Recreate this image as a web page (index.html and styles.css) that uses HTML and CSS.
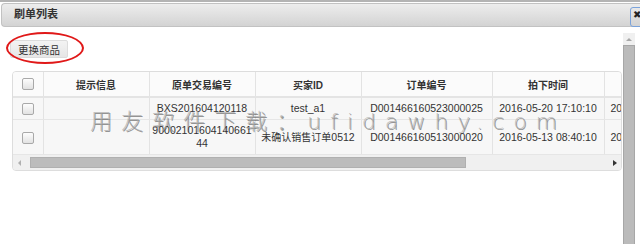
FILE: index.html
```html
<!DOCTYPE html>
<html lang="zh-CN">
<head>
  <meta charset="UTF-8">
  <title>刷单列表</title>
  <link rel="stylesheet" href="styles.css">
</head>
<body>
  <div class="dialog">
    <div class="titlebar">
      <span class="title">刷单列表</span>
      <span class="close">✖</span>
    </div>

    <div class="body">
      <div class="main">
        <div class="toolbar">
          <button class="btn">更换商品</button>
          <span class="ring"></span>
        </div>

        <div class="grid">
          <div class="grid-scroll">
            <table>
              <colgroup>
                <col class="c-check"><col class="c-w"><col class="c-w"><col class="c-w"><col class="c-order"><col class="c-time"><col class="c-time">
              </colgroup>
              <thead>
                <tr>
                  <th><span class="cb"></span></th>
                  <th>提示信息</th>
                  <th>原单交易编号</th>
                  <th>买家ID</th>
                  <th>订单编号</th>
                  <th>拍下时间</th>
                  <th></th>
                </tr>
              </thead>
              <tbody>
                <tr>
                  <td><span class="cb"></span></td>
                  <td></td>
                  <td class="wrap">BXS201604120118</td>
                  <td>test_a1</td>
                  <td>D001466160523000025</td>
                  <td>2016-05-20 17:10:10</td>
                  <td class="cut">20</td>
                </tr>
                <tr>
                  <td><span class="cb"></span></td>
                  <td></td>
                  <td class="wrap">9000210160414066144</td>
                  <td><span class="cjk">未确认销售订单</span>0512</td>
                  <td>D001466160513000020</td>
                  <td>2016-05-13 08:40:10</td>
                  <td class="cut">20</td>
                </tr>
              </tbody>
            </table>
          </div>
          <div class="hscroll">
            <span class="arrow-left"></span>
            <span class="hthumb"></span>
            <span class="arrow-right"></span>
          </div>
        </div>
      </div>

      <div class="vscroll">
        <span class="arrow-up"></span>
        <span class="vthumb"></span>
      </div>
    </div>

    <div class="watermark">用友软件下载：ufidawhy.com</div>
  </div>
</body>
</html>
```

FILE: styles.css
```css
body {
  margin: 0;
  width: 640px;
  height: 244px;
  overflow: hidden;
  background-color: #ffffff;
  color: #333333;
  font-family: 'Liberation Sans', 'Noto Sans CJK SC', sans-serif;
  font-size: 10.5px;
}

.dialog {
  position: relative;
  height: 244px;
  border-top: 2px solid #b4b4b4;
  padding-top: 1px;
  box-sizing: border-box;
}

.titlebar {
  display: flex;
  align-items: flex-start;
  height: 22px;
  margin-left: 1px;
  padding-left: 12px;
  border: 1px solid #c2c2c2;
  border-right: none;
  border-radius: 4px 0 0 4px;
  background: linear-gradient(#ededed, #d3d3d3);
}

.title {
  font-size: 11px;
  font-weight: bold;
  color: #333;
  line-height: 21px;
}

.close {
  margin-left: auto;
  margin-top: 3px;
  margin-right: -4px;
  width: 14px;
  height: 20px;
  border: 1px solid #7ba3db;
  border-radius: 3px;
  font-size: 10px;
  line-height: 14px;
  color: #222;
  text-indent: 2px;
  box-sizing: border-box;
}

.body {
  display: flex;
}

.main {
  width: 623px;
  padding-top: 13px;
}

/* toolbar */
.toolbar {
  position: relative;
  height: 18px;
  padding-left: 10px;
  margin-bottom: 13px;
}

.btn {
  height: 18px;
  width: 58px;
  padding: 0;
  border: 1px solid #dcdcdc;
  border-radius: 2px;
  background: linear-gradient(#f3f3f3, #e6e6e6);
  font-family: inherit;
  font-size: 10.5px;
  color: #333;
}

.ring {
  position: absolute;
  left: 6px;
  top: -8px;
  width: 74px;
  height: 28px;
  border: 2px solid #e01818;
  border-radius: 50%;
}

/* grid */
.grid {
  width: 608px;
  margin-left: 12px;
  border: 1px solid #dddddd;
  border-radius: 4px;
  overflow: hidden;
  background-color: #f7f7f7;
}

.grid-scroll {
  overflow: hidden;
}

table {
  width: 609px;
  table-layout: fixed;
  border-collapse: collapse;
}

.c-check { width: 30px; }
.c-w { width: 106px; }
.c-order { width: 131px; }
.c-time { width: 112px; }
.c-time:last-child { width: 18px; }

th, td {
  border-right: 1px solid #e3e3e3;
  text-align: center;
  white-space: nowrap;
  padding: 0 2px;
  overflow: hidden;
}

th {
  height: 24px;
  font-size: 10px;
  font-weight: bold;
  color: #333;
  background-color: #fbfbfb;
  border-bottom: 2px solid #e4e4e4;
}

td {
  padding-top: 4px;
  padding-bottom: 4px;
  line-height: 13px;
  border-bottom: 1px solid #e6e6e6;
}

td.wrap {
  white-space: normal;
  word-break: break-all;
}

td.cut {
  text-align: left;
  text-overflow: clip;
  padding: 4px 0 4px 6px;
  border-right: none;
}

.cjk {
  font-size: 10px;
}

.cb {
  display: inline-block;
  width: 10px;
  height: 10px;
  vertical-align: middle;
  border: 1px solid #a9a9a9;
  border-radius: 2px;
  background: linear-gradient(#fdfdfd, #e2e2e2);
}

.hscroll {
  display: flex;
  align-items: center;
  height: 15px;
  background-color: #f0f0f0;
}

.hthumb {
  width: 436px;
  height: 11px;
  margin-left: 9px;
  background-color: #bcbcbc;
  border: 1px solid #b0b0b0;
  box-sizing: border-box;
}

.arrow-left {
  margin-left: 5px;
  border-right: 3px solid #b0b0b0;
  border-top: 3px solid transparent;
  border-bottom: 3px solid transparent;
}

.arrow-right {
  margin-left: auto;
  margin-right: 4px;
  border-left: 4px solid #333;
  border-top: 3px solid transparent;
  border-bottom: 3px solid transparent;
}

/* vertical scrollbar */
.vscroll {
  display: flex;
  flex-direction: column;
  align-items: center;
  width: 12px;
  height: 212px;
  margin-top: 6px;
  background-color: #f0f0f0;
}

.arrow-up {
  margin: 5px 0 4px;
  border-bottom: 3px solid #a8a8a8;
  border-left: 3px solid transparent;
  border-right: 3px solid transparent;
}

.vthumb {
  flex: 1;
  width: 12px;
  background-color: #bbbbbb;
  border: 1px solid #a7a7a7;
  box-sizing: border-box;
}

/* watermark over the grid */
.watermark {
  position: absolute;
  left: 90px;
  top: 101px;
  font-family: 'DejaVu Sans', 'Noto Sans CJK SC', sans-serif;
  font-size: 22px;
  font-weight: 300;
  letter-spacing: 9px;
  color: rgba(170, 170, 170, 0.7);
  text-shadow: 1px 1px 0 rgba(50, 50, 50, 0.5);
  white-space: nowrap;
  pointer-events: none;
}
```
